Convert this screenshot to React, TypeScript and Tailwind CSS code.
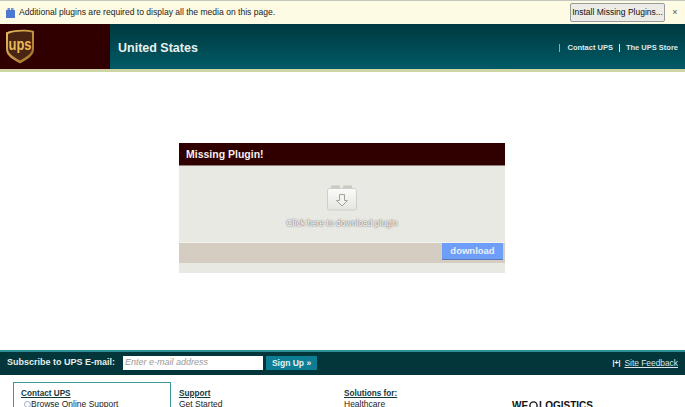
function PluginIcon({ className }: { className?: string }) {
  return (
    <svg viewBox="0 0 30 26" className={className}>
      <defs>
        <linearGradient id="blockFill" x1="0" y1="0" x2="0" y2="1">
          <stop offset="0" stopColor="#fbfbf9" />
          <stop offset="1" stopColor="#e4e4e0" />
        </linearGradient>
      </defs>
      <rect x="4" y="0.500" width="9" height="4" rx="1" fill="#c9c9c4" />
      <rect x="16" y="0.500" width="9" height="4" rx="1" fill="#c9c9c4" />
      <rect x="0.500" y="3.500" width="29" height="21.500" rx="2" fill="url(#blockFill)" stroke="#cfcfca" />
      <path d="M12.500 9.500h5v6h3L15 21 9.500 15.500h3z" fill="#f2f2ef" stroke="#a2a29d" strokeWidth="1" />
    </svg>
  );
}

function UpsLogo({ className }: { className?: string }) {
  return (
    <svg viewBox="0 0 30 36" className={className}>
      <defs>
        <linearGradient id="shieldGold" x1="0" y1="0" x2="1" y2="1">
          <stop offset="0" stopColor="#e8bd62" />
          <stop offset="1" stopColor="#9c6c26" />
        </linearGradient>
      </defs>
      <path d="M1 4.500C8 1 22 1 29 3V21c0 7-7 10.500-14 14.500C8 31.500 1 28 1 21z" fill="url(#shieldGold)" />
      <path d="M3 6C10 3 20 3 27 4.500V20.500c0 5.500-6 8.500-12 12C9 29 3 26 3 20.500z" fill="#4a2412" />
      <text
        x="15"
        y="22"
        textAnchor="middle"
        fontFamily="'Liberation Sans', sans-serif"
        fontWeight="700"
        fontSize="17"
        fill="#e9b959"
        textLength="23"
        lengthAdjust="spacingAndGlyphs"
      >
        ups
      </text>
    </svg>
  );
}

function FooterColumn({ title, item, className }: { title: string; item: string; className?: string }) {
  return (
    <div className={className}>
      <div className="text-[8.200px] leading-[11px] font-bold text-[#15383c] underline">{title}</div>
      <div className="text-[8.500px] leading-[11px] text-[#222]">{item}</div>
    </div>
  );
}

export default function App() {
  return (
    <div className="flex h-[407px] w-[685px] flex-col overflow-hidden bg-white font-['Liberation_Sans',Arial,sans-serif]">
      {/* Browser plugin notice */}
      <div className="flex h-[24px] items-center border-t border-[#c4c6c0] bg-[#fdfbe3] pl-[6px] text-[8.550px] text-[#222]">
        <svg viewBox="0 0 9 10" className="h-[10px] w-[9px]">
          <rect x="1.500" y="0" width="2.500" height="2" fill="#6d8fd8" />
          <rect x="5" y="0" width="2.500" height="2" fill="#6d8fd8" />
          <rect x="0" y="2" width="9" height="8" rx="0.500" fill="#4f78d0" />
        </svg>
        <span className="ml-[4px]">Additional plugins are required to display all the media on this page.</span>
        <button className="ml-auto h-[19px] w-[95px] whitespace-nowrap rounded-[2px] border border-[#9a9a9a] bg-[#ecebe6] text-center text-[8.500px] leading-none text-[#111]">
          Install Missing Plugins...
        </button>
        <span className="w-[20px] text-center text-[9px] text-[#555]">×</span>
      </div>

      {/* Site header */}
      <header className="flex h-[48px] border-b-[3px] border-[#cfd6a4]">
        <div className="flex w-[110px] bg-[#300000] pl-[5px] pt-[4px]">
          <UpsLogo className="h-[36px] w-[30px]" />
        </div>
        <div className="flex flex-1 items-center bg-gradient-to-b from-[#003a40] to-[#005a66] pl-[8px] pt-[3px] text-white">
          <span className="text-[12.500px] font-bold text-[#e8f0f0]">United States</span>
          <nav className="ml-auto flex items-center pr-[7px] text-[7.500px] font-bold text-[#dfe9ea]">
            <span className="h-[8px] border-l border-[#7fb0b5]" />
            <span className="ml-[7px]">Contact UPS</span>
            <span className="ml-[6px] h-[8px] border-l border-[#dfe9ea]" />
            <span className="ml-[6px]">The UPS Store</span>
          </nav>
        </div>
      </header>

      {/* Plugin panel */}
      <main className="flex-1 pl-[179px] pt-[71px]">
        <div className="w-[326px] bg-[#e9e9e4]">
          <div className="flex h-[23px] items-center border-b border-[#8d7f75] bg-[#300000] pl-[7px] pt-[1px] text-[10.500px] font-bold text-[#f4f0ee]">
            Missing Plugin!
          </div>
          <div className="flex h-[76px] flex-col items-center pt-[19px]">
            <PluginIcon className="h-[26px] w-[30px]" />
            <span className="mt-[6px] text-[8.500px] text-white [text-shadow:0_0_2px_#555,0_0_1px_#888]">
              Click here to download plugin
            </span>
          </div>
          <div className="flex h-[21px] justify-end border-t border-[#f2f2ee] bg-[#d5cdc1] pr-[2px]">
            <button className="h-[17px] w-[61px] border-b border-[#5d78b4] bg-[#6f9ef8] text-center text-[9.500px] font-bold text-[#e9f0fb]">
              download
            </button>
          </div>
          <div className="h-[10px]" />
        </div>
      </main>

      {/* Subscribe bar */}
      <div className="flex h-[25px] items-center border-t-[2px] border-[#2f8f96] bg-[#03363a] pl-[7px] pr-[7px] pb-[1px]">
        <span className="text-[9px] font-bold text-[#e6eeee]">Subscribe to UPS E-mail:</span>
        <div className="ml-[8px] flex h-[14px] w-[140px] items-center bg-white pl-[2px] text-[9px] italic text-[#999]">
          Enter e-mail address
        </div>
        <button className="ml-[3px] h-[14px] w-[51px] bg-[#0c7d92] text-center text-[8.500px] font-bold text-[#e6f2f4]">
          Sign Up »
        </button>
        <div className="ml-auto flex items-center text-[8.400px] text-[#dce8e8]">
          <span className="mr-[4px] text-[7px] font-bold text-white">|+|</span>
          <span className="underline">Site Feedback</span>
        </div>
      </div>

      {/* Footer links, cut off by the window */}
      <div className="flex h-[32px] overflow-hidden pl-[13px] pt-[7px]">
        <div className="h-[40px] w-[158px] border border-[#3e98a0] pl-[7px] pt-[5px]">
          <div className="text-[8.200px] leading-[11px] font-bold text-[#15383c] underline">Contact UPS</div>
          <div className="flex items-center text-[8.500px] leading-[11px] text-[#222]">
            <span className="ml-[3px] h-[7px] w-[7px] rounded-full border border-[#9ab]" />
            Browse Online Support
          </div>
        </div>
        <FooterColumn title="Support" item="Get Started" className="ml-[8px] w-[165px] pt-[6px]" />
        <FooterColumn title="Solutions for:" item="Healthcare" className="w-[168px] pt-[6px]" />
        <div className="flex items-center self-start pt-[18px] text-[10px] leading-[11px] font-bold text-[#111]">
          WE
          <svg viewBox="0 0 10 10" className="mx-[1px] h-[9px] w-[9px]">
            <circle cx="5" cy="5" r="4" fill="none" stroke="#111" strokeWidth="1.500" />
          </svg>
          LOGISTICS
        </div>
      </div>
    </div>
  );
}
